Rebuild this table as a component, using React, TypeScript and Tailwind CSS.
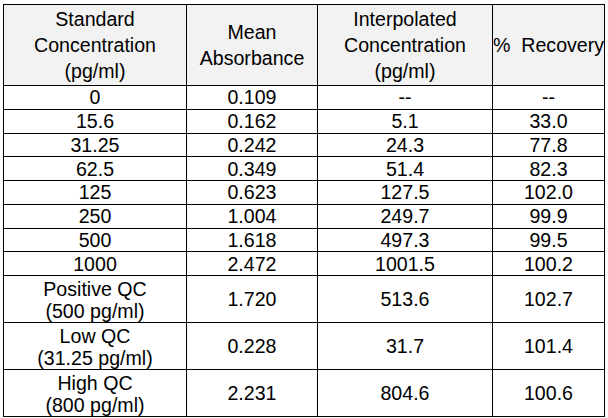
const rows: [string, string, string, string][] = [
  ['0', '0.109', '--', '--'],
  ['15.6', '0.162', '5.1', '33.0'],
  ['31.25', '0.242', '24.3', '77.8'],
  ['62.5', '0.349', '51.4', '82.3'],
  ['125', '0.623', '127.5', '102.0'],
  ['250', '1.004', '249.7', '99.9'],
  ['500', '1.618', '497.3', '99.5'],
  ['1000', '2.472', '1001.5', '100.2'],
];

const qcRows: [string, string, string, string, string][] = [
  ['Positive QC', '(500 pg/ml)', '1.720', '513.6', '102.7'],
  ['Low QC', '(31.25 pg/ml)', '0.228', '31.7', '101.4'],
  ['High QC', '(800 pg/ml)', '2.231', '804.6', '100.6'],
];

const cell = 'border border-black text-center align-middle p-0';

export default function App() {
  return (
    <div className="min-h-screen bg-white pl-[3px] pt-[4px] text-black font-['Liberation_Sans',Arial,sans-serif] text-[19.6px]">
      <table className="table-fixed border-collapse w-[601px]">
        <colgroup>
          <col className="w-[183px]" />
          <col className="w-[131px]" />
          <col className="w-[175px]" />
          <col className="w-[112px]" />
        </colgroup>
        <thead>
          <tr className="h-[81px] bg-[#f2f2f2] leading-[26px]">
            <th className={`${cell} font-normal`}>
              Standard
              <br />
              Concentration
              <br />
              (pg/ml)
            </th>
            <th className={`${cell} font-normal`}>
              Mean
              <br />
              Absorbance
            </th>
            <th className={`${cell} font-normal`}>
              Interpolated
              <br />
              Concentration
              <br />
              (pg/ml)
            </th>
            <th className={`${cell} font-normal text-left whitespace-pre`}>%  Recovery</th>
          </tr>
        </thead>
        <tbody>
          {rows.map((r) => (
            <tr key={r[0]} className="h-[23.75px] leading-[20px]">
              {r.map((v, i) => (
                <td key={i} className={cell}>
                  {v}
                </td>
              ))}
            </tr>
          ))}
          {qcRows.map((r) => (
            <tr key={r[0]} className="h-[46.7px] leading-[22px]">
              <td className={`${cell} pt-[2px]`}>
                {r[0]}
                <br />
                {r[1]}
              </td>
              <td className={cell}>{r[2]}</td>
              <td className={cell}>{r[3]}</td>
              <td className={cell}>{r[4]}</td>
            </tr>
          ))}
        </tbody>
      </table>
    </div>
  );
}
